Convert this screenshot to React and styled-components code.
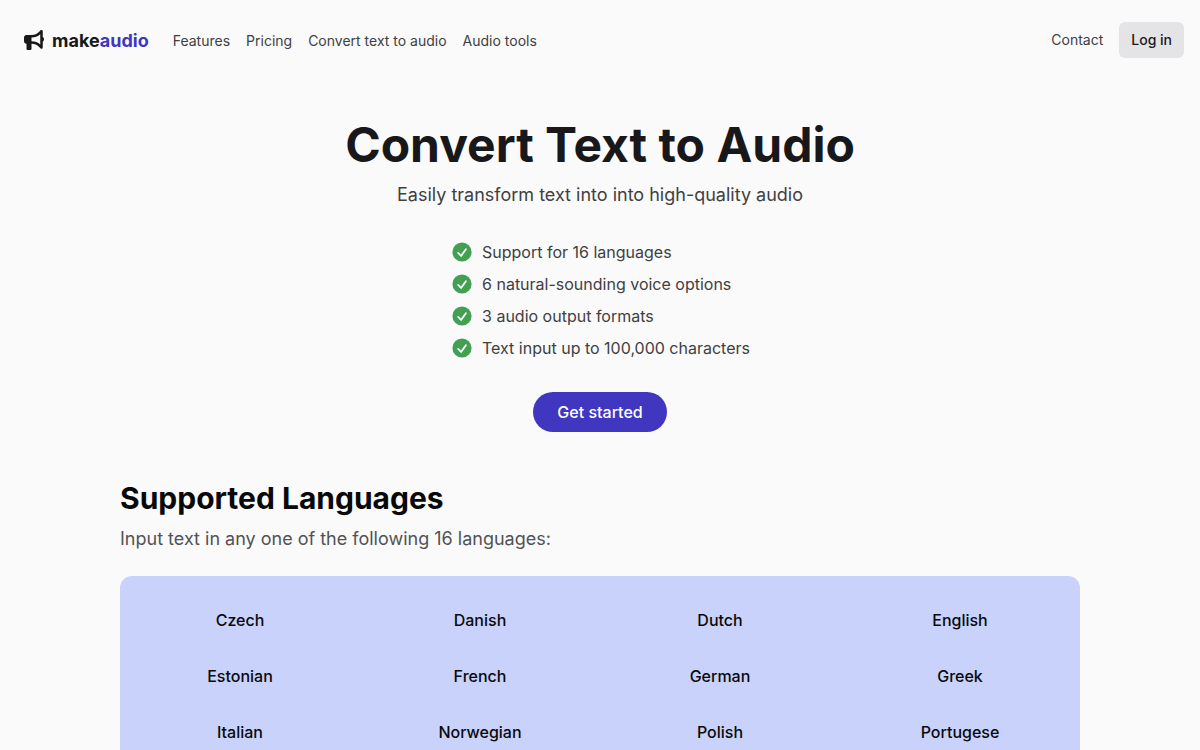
import React from "react";

import { FaBullhorn } from "react-icons/fa6";
import { HiMiniCheckCircle } from "react-icons/hi2";
import styled, { createGlobalStyle, ThemeProvider } from "styled-components";

const theme = {
  background: "#fafafa",
  heading: "#18181a",
  text: "#404042",
  muted: "#525254",
  primary: "#4036c0",
  success: "#43a052",
  button: "#e4e4e6",
  panel: "#c8d2fb",
};

const NAV_LINKS = ["Features", "Pricing", "Convert text to audio", "Audio tools"];

const BENEFITS = [
  "Support for 16 languages",
  "6 natural-sounding voice options",
  "3 audio output formats",
  "Text input up to 100,000 characters",
];

const LANGUAGES = [
  "Czech",
  "Danish",
  "Dutch",
  "English",
  "Estonian",
  "French",
  "German",
  "Greek",
  "Italian",
  "Norwegian",
  "Polish",
  "Portugese",
  "Slovene",
  "Spanish",
  "Swedish",
  "Turkish",
];

export default function App() {
  return (
    <ThemeProvider theme={theme}>
      <GlobalStyle />
      <Header />
      <main>
        <Hero />
        <Languages />
      </main>
    </ThemeProvider>
  );
}

function Header() {
  return (
    <StyledHeader>
      <Brand>
        <Logo href="#">
          <FaBullhorn size={20} aria-hidden="true" />
          <span>
            make<em>audio</em>
          </span>
        </Logo>
        <Nav aria-label="Main">
          {NAV_LINKS.map((label) => (
            <NavLink key={label} href="#">
              {label}
            </NavLink>
          ))}
        </Nav>
      </Brand>
      <Account>
        <NavLink href="#">Contact</NavLink>
        <LoginButton type="button">Log in</LoginButton>
      </Account>
    </StyledHeader>
  );
}

function Hero() {
  return (
    <StyledHero>
      <Title>Convert Text to Audio</Title>
      <Tagline>Easily transform text into into high-quality audio</Tagline>
      <Benefits>
        {BENEFITS.map((benefit) => (
          <Benefit key={benefit}>
            <HiMiniCheckCircle size={24} aria-hidden="true" />
            {benefit}
          </Benefit>
        ))}
      </Benefits>
      <StartButton type="button">Get started</StartButton>
    </StyledHero>
  );
}

function Languages() {
  return (
    <Section>
      <SectionTitle>Supported Languages</SectionTitle>
      <SectionText>
        Input text in any one of the following {LANGUAGES.length} languages:
      </SectionText>
      <LanguageGrid>
        {LANGUAGES.map((language) => (
          <li key={language}>{language}</li>
        ))}
      </LanguageGrid>
    </Section>
  );
}

const GlobalStyle = createGlobalStyle`
  *, *::before, *::after {
    box-sizing: border-box;
  }

  html {
    scrollbar-width: none;
  }

  body {
    margin: 0;
    background: ${({ theme }) => theme.background};
    color: ${({ theme }) => theme.text};
    font-family: Inter, sans-serif;
    font-size: 16px;
    line-height: 24px;
  }

  button {
    border: 0;
    font-family: inherit;
    cursor: pointer;
  }
`;

const StyledHeader = styled.header`
  display: flex;
  align-items: center;
  justify-content: space-between;
  height: 80px;
  padding: 0 16px 0 24px;
`;

const Brand = styled.div`
  display: flex;
  align-items: center;
  gap: 24px;
  padding-top: 2px;
`;

const Logo = styled.a`
  display: flex;
  align-items: center;
  gap: 8px;
  color: ${({ theme }) => theme.heading};
  font-size: 18px;
  font-weight: 700;
  line-height: 28px;
  text-decoration: none;

  svg {
    margin-bottom: 2px;
  }

  em {
    color: ${({ theme }) => theme.primary};
    font-style: normal;
  }
`;

const Nav = styled.nav`
  display: flex;
  gap: 16px;
`;

const NavLink = styled.a`
  color: ${({ theme }) => theme.text};
  font-size: 14px;
  line-height: 20px;
  text-decoration: none;
`;

const Account = styled.div`
  display: flex;
  align-items: center;
  gap: 16px;
`;

const LoginButton = styled.button`
  padding: 8px 12px;
  border-radius: 6px;
  background: ${({ theme }) => theme.button};
  color: ${({ theme }) => theme.heading};
  font-size: 14px;
  font-weight: 500;
  line-height: 20px;
`;

const StyledHero = styled.section`
  display: flex;
  flex-direction: column;
  align-items: center;
  padding: 40px 16px 48px;
  text-align: center;
`;

const Title = styled.h1`
  margin: 0;
  color: ${({ theme }) => theme.heading};
  font-size: 48px;
  font-weight: 700;
  line-height: 50px;
`;

const Tagline = styled.p`
  margin: 10px 0 0;
  font-size: 18px;
  line-height: 30px;
`;

const Benefits = styled.ul`
  display: flex;
  flex-direction: column;
  gap: 8px;
  margin: 30px 0 32px;
  padding: 0;
  list-style: none;
`;

const Benefit = styled.li`
  display: flex;
  align-items: center;
  gap: 8px;

  svg {
    color: ${({ theme }) => theme.success};
  }
`;

const StartButton = styled.button`
  padding: 8px 24px;
  border-radius: 20px;
  background: ${({ theme }) => theme.primary};
  color: #fff;
  font-size: 16px;
  font-weight: 500;
  line-height: 24px;
`;

const Section = styled.section`
  max-width: 992px;
  margin: 0 auto;
  padding: 0 16px 64px;
`;

const SectionTitle = styled.h2`
  margin: 0;
  color: #09090a;
  font-size: 30px;
  font-weight: 700;
  line-height: 36px;
`;

const SectionText = styled.p`
  margin: 8px 0 22px;
  color: ${({ theme }) => theme.muted};
  font-size: 18px;
  line-height: 30px;
`;

const LanguageGrid = styled.ul`
  display: grid;
  grid-template-columns: repeat(4, 1fr);
  gap: 32px 0;
  margin: 0;
  padding: 32px 0;
  border-radius: 12px;
  background: ${({ theme }) => theme.panel};
  color: #09090a;
  font-weight: 500;
  text-align: center;
  list-style: none;
`;
